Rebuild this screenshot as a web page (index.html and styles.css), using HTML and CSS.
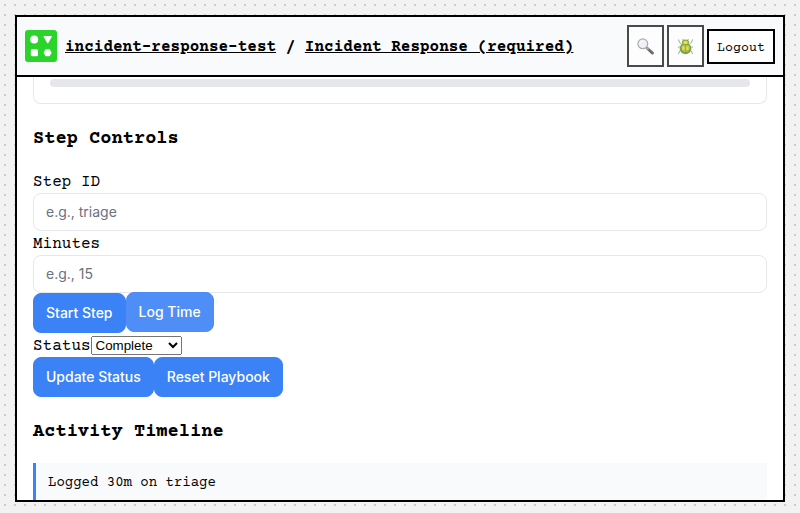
FILE: index.html
```html
<!DOCTYPE html>
<html lang="en">
<head>
<meta charset="utf-8">
<meta name="viewport" content="width=device-width, initial-scale=1">
<title>Incident Response</title>
<link rel="stylesheet" href="styles.css">
</head>
<body>
<div class="window">
  <header class="topbar">
    <svg class="logo" viewBox="0 0 32 32" aria-hidden="true">
      <rect width="32" height="32" rx="3" fill="#2bd42b"/>
      <g fill="#fff">
        <circle cx="9.2" cy="9.6" r="4"/>
        <path d="M19 6h7.4q.8 0 .4.8L23.3 13q-.6.8-1.2 0L18.600 6.800Q18.200 6 19 6z"/>
        <rect x="5.800" y="19" width="7.200" height="7.200" rx="1.500"/>
        <path d="M20.700 19.500h3.800l1.800 3.200-1.800 3.200h-3.800l-1.800-3.200z" stroke="#fff" stroke-width=".6" stroke-linejoin="round"/>
      </g>
    </svg>
    <nav class="crumbs"><a href="#">incident-response-test</a> / <a href="#">Incident Response (required)</a></nav>
    <div class="actions">
      <button class="icon-button" type="button" aria-label="Search">
        <svg viewBox="0 0 17 17" aria-hidden="true">
          <path d="M10.200 10.200l5.300 4.900" stroke="#333" stroke-width="2.800" stroke-linecap="round"/>
          <path d="M9.500 9.500l2 1.900" stroke="#999" stroke-width="1.500"/>
          <circle cx="5.800" cy="5.800" r="4.900" fill="#eceef2" stroke="#888d92" stroke-width="1.200"/>
          <path d="M3 5.500a3 3 0 0 1 3-2.600" fill="none" stroke="#fff"/>
        </svg>
      </button>
      <button class="icon-button" type="button" aria-label="Debug">
        <svg viewBox="0 0 17 17" aria-hidden="true">
          <g fill="none" stroke="#5c6f2c" stroke-width=".8">
            <path d="M7 3L5.500 1M10 3l1.500-2M4.500 6L2.500 4.500 1.500 1.500M12.500 6l2-1.500 1-3M4 9H.8M13 9h3.200M4.500 12L2.500 13 1.500 16M12.500 12l2 1 1 3"/>
          </g>
          <ellipse cx="8.500" cy="10.500" rx="5.800" ry="5.700" fill="#3f8200"/>
          <ellipse cx="8.500" cy="9.800" rx="4.200" ry="4.200" fill="#9aaf00"/>
          <ellipse cx="8.500" cy="4.300" rx="3.600" ry="2.800" fill="#558f00"/>
          <ellipse cx="8.500" cy="4.500" rx="2.300" ry="1.700" fill="#ffc800"/>
          <path d="M4.300 7.300q4.200-1.500 8.400 0M8.500 7v8.800" fill="none" stroke="#4a7a00" stroke-width=".6"/>
          <path d="M6.500 8.500v3.200M10.500 8.500v3.200" stroke="#ffd000" stroke-width="2"/>
        </svg>
      </button>
      <button class="logout" type="button">Logout</button>
    </div>
  </header>
  <main class="content">
    <div class="card"><div class="progress"></div></div>
    <h3>Step Controls</h3>
    <form>
      <label class="label" for="step">Step ID</label>
      <input class="field" id="step" type="text" placeholder="e.g., triage">
      <label class="label" for="minutes">Minutes</label>
      <input class="field" id="minutes" type="text" placeholder="e.g., 15">
      <div class="row">
        <button class="button" type="button">Start Step</button>
        <button class="button raised" type="button">Log Time</button>
      </div>
      <div class="row status">
        <label class="label" for="status">Status</label>
        <select id="status"><option>Not Started</option><option selected>Complete</option></select>
      </div>
      <div class="row">
        <button class="button" type="button">Update Status</button>
        <button class="button" type="button">Reset Playbook</button>
      </div>
    </form>
    <h3>Activity Timeline</h3>
    <div class="entry">Logged 30m on triage</div>
  </main>
</div>
</body>
</html>
```
FILE: styles.css
```css
* {
  box-sizing: border-box;
}

body {
  margin: 0;
  height: 100vh;
  padding: 15px 15px 11px;
  background: #f2f2f2 conic-gradient(from 270deg at 2px 2px, #ccc 90deg, transparent 0) 4px 4px / 10px 10px;
  color: #000;
  font-family: "Courier Prime", "Liberation Mono", monospace;
  font-size: 16px;
  line-height: 24px;
}

.window {
  display: flex;
  flex-direction: column;
  height: 100%;
  border: 2px solid #000;
  background: #fff;
  overflow: hidden;
}

.topbar {
  display: flex;
  flex: none;
  align-items: center;
  gap: 8px;
  padding: 8px;
  border-bottom: 2px solid #000;
  background: #f9fafc;
}

.logo {
  width: 32px;
  height: 32px;
  flex: none;
}

.crumbs {
  flex: 1;
  padding-top: 2px;
  font-weight: bold;
}

.crumbs a {
  color: inherit;
}

.actions {
  display: flex;
  align-items: center;
  gap: 3px;
}

.icon-button {
  display: flex;
  align-items: center;
  justify-content: center;
  width: 37px;
  height: 42px;
  padding: 0;
  border: 2px solid #000;
  background: #fff;
  opacity: 0.7;
}

.icon-button svg {
  width: 17px;
  height: 17px;
}

.logout {
  height: 35px;
  padding: 4px 8px 0;
  border: 2px solid #000;
  background: #fff;
  color: #000;
  font-family: inherit;
}

.content {
  flex: 1;
  min-height: 0;
  overflow: hidden;
  padding: 0 16px;
}

.card {
  padding: 2px 16px 16px;
  border: 1px solid #e5e7eb;
  border-top: 0;
  border-radius: 0 0 8px 8px;
}

.progress {
  height: 8px;
  border-radius: 4px;
  background: #e5e7eb;
}

h3 {
  padding-top: 3px;
  line-height: 25px;
}

.label {
  display: block;
  padding-top: 2px;
  line-height: 22px;
}

.field {
  display: block;
  width: 100%;
  height: 38px;
  padding: 7px 12px 9px;
  border: 1px solid #e5e7eb;
  border-radius: 8px;
  background: #fff;
  font-family: Inter, sans-serif;
  font-size: 14px;
}

.field::placeholder {
  color: #6b7280;
}

.row {
  display: flex;
}

.status {
  height: 24px;
  align-items: center;
}

.status select {
  width: 91px;
  font-family: "Liberation Sans", sans-serif;
}

.button {
  padding: 8px 12px;
  border: 1px solid #3b82f6;
  border-radius: 8px;
  background: #3b82f6;
  color: #fff;
  font-family: Inter, sans-serif;
  font-size: 14px;
  font-weight: 500;
  line-height: 22px;
}

.raised {
  opacity: 0.9;
  transform: translateY(-1px);
}

.entry {
  padding: 8px 12px;
  border-left: 3px solid #3b82f6;
  background: #f9fafc;
  font-size: 14px;
}
```
